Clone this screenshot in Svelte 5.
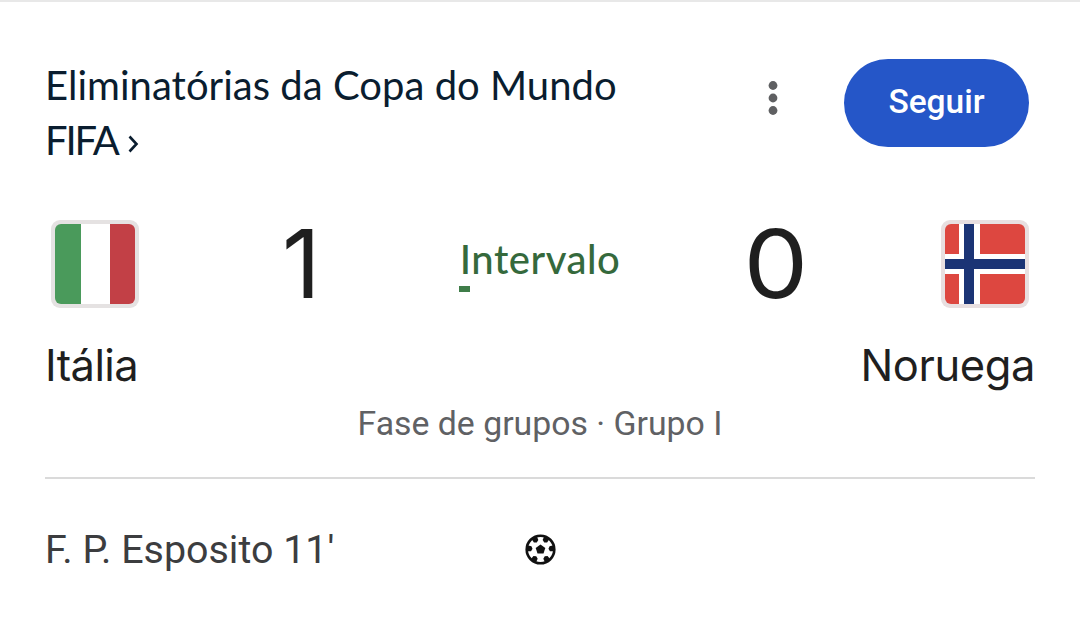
<script lang="ts">
  const competition = ['Eliminatórias da Copa do Mundo', 'FIFA']
  const home = { name: 'Itália', score: 1 }
  const away = { name: 'Noruega', score: 0 }
  const scorer = "F. P. Esposito 11'"

  // Angles of the outer panels on the ball
  const panels = [28, 85, 148, 212, 275, 332]
</script>

<main class="match">
  <header class="header">
    <h1 class="competition">
      <span class="line">{competition[0]}</span>
      <span class="line last">
        <span class="short">{competition[1]}</span>
        <svg class="chevron" width="11" height="18" viewBox="0 0 11 18"><path d="M1.5 1.5 8.5 9l-7 7.5" /></svg>
      </span>
    </h1>
    <button class="more" aria-label="Mais opções">
      <svg width="10" height="36" viewBox="0 0 10 36">
        <circle cx="5" cy="5.5" r="4.4" />
        <circle cx="5" cy="18" r="4.4" />
        <circle cx="5" cy="30.5" r="4.4" />
      </svg>
    </button>
    <button class="follow">Seguir</button>
  </header>

  <section class="scoreboard">
    <svg class="flag" width="88" height="88" viewBox="0 0 88 88">
      <rect width="88" height="88" rx="9" fill="#e5e2e2" />
      <path d="M10 4h20v80H10a6 6 0 0 1-6-6V10a6 6 0 0 1 6-6z" fill="#4a9a5b" />
      <path d="M30 4h29v80H30z" fill="#fff" />
      <path d="M59 4h19a6 6 0 0 1 6 6v68a6 6 0 0 1-6 6H59z" fill="#c24046" />
    </svg>
    <span class="score home">{home.score}</span>
    <span class="status">Intervalo</span>
    <span class="score away">{away.score}</span>
    <svg class="flag" width="88" height="88" viewBox="0 0 88 88">
      <rect width="88" height="88" rx="9" fill="#e8dfe0" />
      <rect x="4" y="4" width="80" height="80" rx="6" fill="#dd4740" />
      <path d="M18 4h21v80H18zM4 34h80v20H4z" fill="#fff" />
      <path d="M23 4h10v80H23zM4 39h80v10H4z" fill="#1b3475" />
    </svg>
  </section>

  <div class="teams">
    <span class="home-name">{home.name}</span>
    <span>{away.name}</span>
  </div>
  <p class="stage">Fase de grupos · Grupo I</p>

  <footer class="goals">
    <span class="scorer">{scorer}</span>
    <svg class="ball" width="32" height="32" viewBox="0 0 32 32">
      <circle cx="16.5" cy="16.5" r="13.8" />
      <path d="m16.5 11.5 4.8 3.5-1.8 5.5h-6l-1.8-5.5z" />
      {#each panels as angle}
        <path d="M13.5 3h6l-.5 4.2-2.5 1.3L14 7.2z" transform="rotate({angle} 16.5 16.5)" />
      {/each}
    </svg>
  </footer>
</main>

<style>
  :global(body) {
    background: #fff;
  }

  .match {
    box-sizing: border-box;
    height: 618px;
    padding: 57px 45px 0;
    border-top: 2px solid #e8e8e8;
    font-family: Roboto, sans-serif;
    color: #1f1f1f;
  }

  .header {
    display: flex;
    height: 161px;
  }

  .competition {
    width: 720px;
    margin: -2px 0 0;
    font: 400 40px/56px Lato, sans-serif;
    letter-spacing: 0.03px;
    color: #0a1d2f;
  }

  .line {
    display: block;
  }

  .last {
    display: flex;
    align-items: center;
    gap: 10px;
    margin-top: -1px;
  }

  .short {
    letter-spacing: -2.1px;
  }

  .chevron {
    margin-top: 7px;
    fill: none;
    stroke: #0a1d2f;
    stroke-width: 2.6;
  }

  button {
    padding: 0;
    border: 0;
    background: none;
  }

  .more {
    width: 16px;
    height: 80px;
    fill: #5f6062;
  }

  .follow {
    width: 185px;
    height: 88px;
    margin-left: auto;
    margin-right: 6px;
    padding-bottom: 4px;
    border-radius: 44px;
    background: #2556c8;
    color: #fff;
    font: 500 33.5px Roboto, sans-serif;
  }

  .scoreboard {
    display: grid;
    grid-template-columns: 88px 1fr 412px 1fr 88px;
    height: 88px;
    padding: 0 6px;
  }

  .score {
    font: 400 95px/88px Inter, sans-serif;
  }

  .home {
    padding-left: 143px;
  }

  .away {
    justify-self: start;
    transform: scaleX(1.08);
  }

  .status {
    position: relative;
    justify-self: center;
    font: 500 40px/78px Lato, sans-serif;
    letter-spacing: 0.5px;
    color: #35693c;
  }

  /* Progress tick under the period label */
  .status::after {
    content: '';
    position: absolute;
    left: -1px;
    top: 66px;
    width: 11px;
    height: 6px;
    background: #3f7d49;
  }

  .teams {
    display: flex;
    justify-content: space-between;
    margin-top: 27px;
    font: 400 43.5px/60px Inter, sans-serif;
    letter-spacing: -0.4px;
  }

  .home-name {
    letter-spacing: -0.6px;
  }

  .stage {
    margin: 0;
    text-align: center;
    font-size: 33.8px;
    line-height: 58px;
    color: #606164;
  }

  .goals {
    display: grid;
    grid-template-columns: 1fr 32px 1fr;
    align-items: center;
    height: 140px;
    margin-top: 24px;
    border-top: 2px solid #dadada;
    font-size: 39.4px;
    color: #3c3d3f;
  }

  .ball path {
    fill: #111;
  }

  .ball circle {
    fill: #fff;
    stroke: #111;
    stroke-width: 2.6;
  }
</style>
